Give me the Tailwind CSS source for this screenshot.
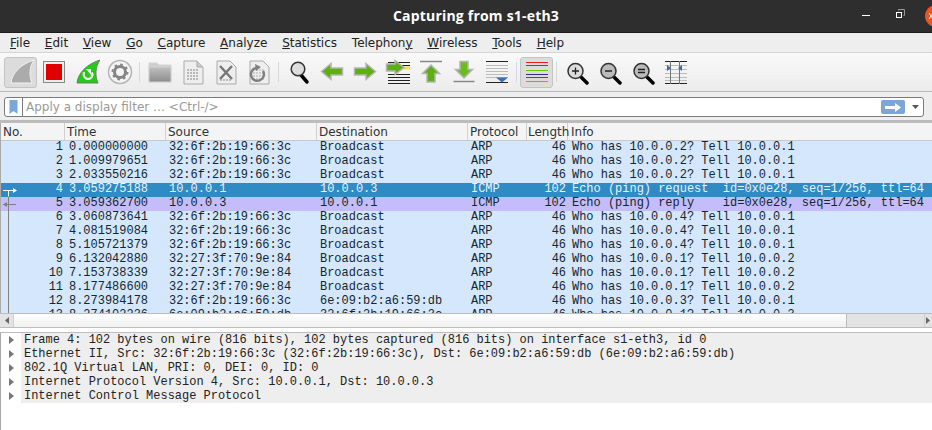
<!DOCTYPE html>
<html lang="en">

<head>
    <meta charset="UTF-8">
    <title>Capturing from s1-eth3</title>
    <script src="https://cdn.jsdelivr.net/npm/@tailwindcss/browser@4"></script>
</head>

<body class="w-[932px] h-[430px] overflow-hidden bg-white font-['DejaVu_Sans',sans-serif] text-[#2e3436]">
    <!-- title bar -->
    <div class="h-[33px] bg-[#2f2e2e] border-b border-[#1d1d1d] relative flex items-center justify-center pl-[20px]">
        <span class="font-['Open_Sans',sans-serif] font-bold text-[14px] tracking-[0.2px] text-white pb-[2px]">Capturing from s1-eth3</span>
        <div class="absolute left-[862px] top-[15px] w-[8px] h-[1px] bg-white"></div>
        <svg class="absolute left-[895px] top-[9px]" width="10" height="10" viewBox="0 0 10 10" fill="none">
            <path d="M3.500 1.500V.5h6v6h-1" stroke="#999"/>
            <rect x="1.500" y="3.500" width="5" height="5" stroke="#fff"/>
        </svg>
        <div class="absolute left-[925px] top-[5px] w-[22px] h-[22px] rounded-full bg-[#e95420]"></div>
        <svg class="absolute left-[928px] top-[12px]" width="4" height="8" viewBox="0 0 4 8" fill="none"><path d="M1 1l4 6M1 7l4-6" stroke="#fff"/></svg>
    </div>

    <!-- menu bar -->
    <div class="h-[20px] bg-[#eeeeee] flex items-center pl-[2.600px] text-[12px] text-[#222] border-b border-[#d6d6d6]">
        <span class="px-[7.400px]"><u>F</u>ile</span>
        <span class="px-[7.400px]"><u>E</u>dit</span>
        <span class="px-[7.400px]"><u>V</u>iew</span>
        <span class="px-[7.400px]"><u>G</u>o</span>
        <span class="px-[7.400px]"><u>C</u>apture</span>
        <span class="px-[7.400px]"><u>A</u>nalyze</span>
        <span class="px-[7.400px]"><u>S</u>tatistics</span>
        <span class="px-[7.400px]">Telephon<u>y</u></span>
        <span class="px-[7.400px]"><u>W</u>ireless</span>
        <span class="px-[7.400px]"><u>T</u>ools</span>
        <span class="px-[7.400px]"><u>H</u>elp</span>
    </div>

    <!-- toolbar -->
    <div class="h-[39px] bg-gradient-to-b from-[#f9f9f9] to-[#ececec] border-b border-[#b9b9b9] flex items-center pl-[4px]">
        <div class="w-[33px] h-[31px] rounded-[3px] bg-[#dcdcdc] border border-[#c4c4c4] flex items-center justify-center">
            <svg width="26" height="26" viewBox="0 0 26 26"><path d="M3 24C4 14 13 5 26 1C21 8 21 17 24 24Z" fill="#ababab" stroke="#f2f2f2"/></svg>
        </div>
        <div class="w-[33px] flex justify-center">
            <svg width="24" height="24" viewBox="0 0 24 24"><rect x="1.500" y="1.500" width="21" height="21" fill="#eee" stroke="#888"/><rect x="4" y="4" width="16" height="16" fill="#e00000"/></svg>
        </div>
        <div class="w-[33px] flex justify-center">
            <svg width="26" height="26" viewBox="0 0 26 26"><path d="M3 24C4 14 13 5 26 1C21 8 21 17 24 24Z" fill="#22cc11" stroke="#777"/><path d="M10 13c-1 4 1 7 4 7s5.500-3 4-6.500" fill="none" stroke="#fff" stroke-width="2.200"/><path d="M12 10l5 0 0 6z" fill="#fff"/></svg>
        </div>
        <div class="w-[33px] flex justify-center">
            <svg width="26" height="26" viewBox="0 0 26 26"><circle cx="13" cy="13" r="11.500" fill="#f4f4f4" stroke="#b4b4b4" stroke-width="1.500"/><circle cx="13" cy="13" r="5.500" fill="none" stroke="#848484" stroke-width="3"/><circle cx="13" cy="13" r="7.500" fill="none" stroke="#848484" stroke-width="2" stroke-dasharray="2.500 3.390"/></svg>
        </div>
        <div class="w-[7px] flex justify-center"><div class="w-[1px] h-[20px] bg-[#d8d8d8]"></div></div>
        <div class="w-[33px] flex justify-center">
            <svg width="26" height="26" viewBox="0 0 26 26"><defs><linearGradient id="fold" x1="0" y1="0" x2="0" y2="1"><stop offset="0" stop-color="#c0c0c0"/><stop offset="1" stop-color="#8c8c8c"/></linearGradient></defs><path d="M2 4h8l2 2h12v17H2z" fill="#cecece" stroke="#d4d4d4"/><rect x="2" y="8" width="22" height="15" fill="url(#fold)" stroke="#d4d4d4"/></svg>
        </div>
        <div class="w-[33px] flex justify-center">
            <svg width="26" height="26" viewBox="0 0 26 26"><path d="M4 2h13l6 6v17H4z" fill="#eee" stroke="#aaa"/><path d="M17 2v6h6" fill="#ccc" stroke="#aaa"/><path d="M7 11h12M7 14h12M7 17h12M7 20h12" stroke="#a8a8a8" stroke-width="1.500" stroke-dasharray="2 1"/></svg>
        </div>
        <div class="w-[33px] flex justify-center">
            <svg width="26" height="26" viewBox="0 0 26 26"><path d="M4 2h13l6 6v17H4z" fill="#eee" stroke="#aaa"/><path d="M7 21h12" stroke="#aaa" stroke-width="1.500" stroke-dasharray="2 1"/><path d="M7 7l12 13M19 7L7 20" stroke="#777" stroke-width="2.500"/></svg>
        </div>
        <div class="w-[33px] flex justify-center">
            <svg width="26" height="26" viewBox="0 0 26 26"><path d="M4 2h13l6 6v17H4z" fill="#eee" stroke="#aaa"/><path d="M7 11h12M7 14h12M7 17h12M7 20h12" stroke="#c4c4c4" stroke-width="1.500" stroke-dasharray="2 1"/><path d="M10 9a6.500 6.500 0 1 0 7 3" fill="none" stroke="#808080" stroke-width="2.500"/><path d="M9 5l6 3-5 4z" fill="#808080"/></svg>
        </div>
        <div class="w-[7px] flex justify-center"><div class="w-[1px] h-[20px] bg-[#d8d8d8]"></div></div>
        <div class="w-[33px] flex justify-center">
            <svg width="26" height="26" viewBox="0 0 26 26"><path d="M15 16l6 7" stroke="#000" stroke-width="3.500" stroke-linecap="round"/><circle cx="12" cy="10" r="6.800" fill="#ddd" stroke="#333" stroke-width="1.500"/></svg>
        </div>
        <div class="w-[33px] flex justify-center">
            <svg width="26" height="26" viewBox="0 0 26 26"><path d="M2.500 12.500L12 4.500v4.500h11.500v7H12v4.500z" fill="#5fae14" stroke="#b5b5b5" stroke-width="1.500"/></svg>
        </div>
        <div class="w-[33px] flex justify-center">
            <svg width="26" height="26" viewBox="0 0 26 26"><path d="M23.500 12.500L14 4.500v4.500H2.500v7H14v4.500z" fill="#5fae14" stroke="#b5b5b5" stroke-width="1.500"/></svg>
        </div>
        <div class="w-[33px] flex justify-center">
            <svg width="26" height="26" viewBox="0 0 26 26"><path d="M3 3.500h22M3 6.500h22M3 15.500h22M3 18.500h22M3 21.500h22M3 24.500h22" stroke="#222"/><rect x="18" y="7.500" width="7" height="3" fill="#f4e04d"/><path d="M19 8.500L10 1.500v3.500H1.500v7H10v3.500z" fill="#5fae14" stroke="#b5b5b5" stroke-width="1.500"/></svg>
        </div>
        <div class="w-[33px] flex justify-center">
            <svg width="26" height="26" viewBox="0 0 26 26"><path d="M2 2.500h22" stroke="#888" stroke-width="1.500"/><path d="M13 6l8.500 8.500h-4.500v8.500H9v-8.500H4.500z" fill="#5fae14" stroke="#b5b5b5" stroke-width="1.500"/></svg>
        </div>
        <div class="w-[33px] flex justify-center">
            <svg width="26" height="26" viewBox="0 0 26 26"><path d="M2.500 22.500h21" stroke="#888" stroke-width="1.500"/><path d="M13 19l8.500-8.500h-4.500V2.500H9v8H4.500z" fill="#6cbc1c" stroke="#b5b5b5" stroke-width="1.500"/></svg>
        </div>
        <div class="w-[33px] flex justify-center">
            <svg width="26" height="26" viewBox="0 0 26 26"><path d="M2 2.500h22M2 23.500h22" stroke="#222"/><path d="M2 6.500h22M2 9.500h22M2 12.500h22M2 15.500h22M2 18.500h22" stroke="#bbb"/><path d="M12 18.500h12l-6 5z" fill="#3b6fb0"/></svg>
        </div>
        <div class="w-[7px] flex justify-center"><div class="w-[1px] h-[20px] bg-[#d8d8d8]"></div></div>
        <div class="w-[33px] h-[31px] rounded-[3px] bg-[#dcdcdc] border border-[#c4c4c4] flex items-center justify-center">
            <svg width="24" height="24" viewBox="0 0 24 24"><path d="M1 2.500h22" stroke="#e02020"/><path d="M1 5.500h22" stroke="#3050d0"/><path d="M1 10.500h22" stroke="#60d000"/><path d="M1 14.500h22" stroke="#303080"/><path d="M1 17.500h22" stroke="#803090"/><path d="M1 21.500h22" stroke="#c09020"/></svg>
        </div>
        <div class="w-[7px] flex justify-center"><div class="w-[1px] h-[20px] bg-[#d8d8d8]"></div></div>
        <div class="w-[33px] flex justify-center">
            <svg width="26" height="26" viewBox="0 0 26 26"><path d="M17 18l6 6" stroke="#000" stroke-width="3.500" stroke-linecap="round"/><circle cx="11.500" cy="12" r="7.500" fill="#ddd" stroke="#333" stroke-width="1.500"/><path d="M8 12h7M11.500 8.500v7" stroke="#222" stroke-width="1.300"/></svg>
        </div>
        <div class="w-[33px] flex justify-center">
            <svg width="26" height="26" viewBox="0 0 26 26"><path d="M17 18l6 6" stroke="#000" stroke-width="3.500" stroke-linecap="round"/><circle cx="11.500" cy="12" r="7.500" fill="#bbb" stroke="#333" stroke-width="1.500"/><path d="M8 12h7" stroke="#222" stroke-width="1.500"/></svg>
        </div>
        <div class="w-[33px] flex justify-center">
            <svg width="26" height="26" viewBox="0 0 26 26"><path d="M17 18l6 6" stroke="#000" stroke-width="3.500" stroke-linecap="round"/><circle cx="11.500" cy="12" r="7.500" fill="#bbb" stroke="#333" stroke-width="1.500"/><path d="M8 10.500h7M8 13.500h7" stroke="#222" stroke-width="1.300"/></svg>
        </div>
        <div class="w-[33px] flex justify-center">
            <svg width="26" height="26" viewBox="0 0 26 26"><path d="M2 2.500h22M2 24.500h22" stroke="#222"/><path d="M2 6.500h22M2 10.500h22M2 14.500h22M2 18.500h22M2 21.500h22" stroke="#bbb"/><path d="M7.500 2v23M16.500 2v23" stroke="#777"/><path d="M4 6l4 3-4 3zM19 6l-4 3 4 3z" fill="#3b6fb0"/></svg>
        </div>
    </div>

    <!-- display filter -->
    <div class="h-[31px] bg-[#eeeeee] pt-[5px] px-[4px] border-b-[3px] border-[#bcbcbc]">
        <div class="w-[920px] h-[20px] bg-white border border-[#7b7b7b] rounded-[3px] flex items-center text-[12px] text-[#9a9a9a]">
            <div class="w-[18px] h-full border-r border-[#7b7b7b] flex items-center justify-center shrink-0">
                <svg width="9" height="14" viewBox="0 0 9 14"><path d="M.5 0h8v14L4.500 11 .5 14z" fill="#7aa6da"/></svg>
            </div>
            <span class="pl-[3px] grow">Apply a display filter … &lt;Ctrl-/&gt;</span>
            <div class="w-[24px] h-[14px] rounded-[2px] bg-[#7aa6da] flex items-center justify-center">
                <svg width="16" height="9" viewBox="0 0 16 9"><path d="M0 3h10V0l6 4.500-6 4.500V6H0z" fill="#fff"/></svg>
            </div>
            <svg class="ml-[7px] mr-[4px]" width="7" height="4" viewBox="0 0 7 4"><path d="M0 0h7L3.500 4z" fill="#555"/></svg>
        </div>
    </div>

    <!-- packet list -->
    <div class="relative h-[190px] overflow-hidden border-l border-[#aaa]">
        <div id="head" class="h-[18px] grid grid-cols-[64px_101px_151px_151px_59px_41px_1fr] bg-[#f4f4f4] border-b border-[#c8c8c8] text-[12px] text-[#2e3436]">
            <div class="pl-[2px] border-r border-[#d0d0d0] leading-[18px]">No.</div>
            <div class="pl-[2px] border-r border-[#d0d0d0] leading-[18px]">Time</div>
            <div class="pl-[2px] border-r border-[#d0d0d0] leading-[18px]">Source</div>
            <div class="pl-[2px] border-r border-[#d0d0d0] leading-[18px]">Destination</div>
            <div class="pl-[2px] border-r border-[#d0d0d0] leading-[18px]">Protocol</div>
            <div class="pl-[1px] border-r border-[#d0d0d0] leading-[18px] whitespace-nowrap">Length</div>
            <div class="pl-[3px] leading-[18px]">Info</div>
        </div>
        <div id="rows" class="font-['Liberation_Mono',monospace] text-[11.97px]"></div>
        <!-- related packet marks -->
        <svg class="absolute left-0 top-[60px]" width="20" height="130" viewBox="0 0 20 130" fill="none">
            <path d="M2 7.500h11" stroke="#fff"/><path d="M12 5l4 2.500-4 2.500z" fill="#fff"/><path d="M7.500 7.500v6" stroke="#fff"/>
            <path d="M2 21.500h13" stroke="#808080"/><path d="M7.500 14v116" stroke="#808080"/><path d="M6 19l-4 2.500 4 2.500z" fill="#808080"/>
        </svg>
    </div>

    <!-- horizontal scrollbar -->
    <div class="h-[15px] flex border-y border-[#bcbcbc] bg-[#e3e3e3]">
        <div class="w-[14px] border-r border-[#d0d0d0] flex items-center justify-center">
            <svg width="4" height="7" viewBox="0 0 4 7"><path d="M4 0v7L0 3.500z" fill="#666"/></svg>
        </div>
        <div class="w-[833px] border-r border-[#bcbcbc] bg-gradient-to-b from-white to-[#f0f0f0]"></div>
        <div class="grow"></div>
        <div class="w-[8px] border-l border-[#d0d0d0] flex items-center pl-[1px]">
            <svg width="4" height="7" viewBox="0 0 4 7"><path d="M0 0v7L4 3.500z" fill="#666"/></svg>
        </div>
    </div>

    <!-- packet details -->
    <div class="mt-[4px] border-t border-[#bcbcbc] border-l border-l-[#aaa] h-[98px] flex items-start">
        <div class="w-[20px] shrink-0 flex flex-col items-center">
            <svg class="my-[3px] ml-[1px]" width="5" height="8" viewBox="0 0 5 8"><path d="M0 0v8l5-4z" fill="#777"/></svg>
            <svg class="my-[3px] ml-[1px]" width="5" height="8" viewBox="0 0 5 8"><path d="M0 0v8l5-4z" fill="#777"/></svg>
            <svg class="my-[3px] ml-[1px]" width="5" height="8" viewBox="0 0 5 8"><path d="M0 0v8l5-4z" fill="#777"/></svg>
            <svg class="my-[3px] ml-[1px]" width="5" height="8" viewBox="0 0 5 8"><path d="M0 0v8l5-4z" fill="#777"/></svg>
            <svg class="my-[3px] ml-[1px]" width="5" height="8" viewBox="0 0 5 8"><path d="M0 0v8l5-4z" fill="#777"/></svg>
        </div>
        <div class="grow h-[70px] bg-[#eeeeee] pl-[3px] font-['Liberation_Mono',monospace] text-[11.97px] leading-[14px] text-[#222]">
            <div>Frame 4: 102 bytes on wire (816 bits), 102 bytes captured (816 bits) on interface s1-eth3, id 0</div>
            <div>Ethernet II, Src: 32:6f:2b:19:66:3c (32:6f:2b:19:66:3c), Dst: 6e:09:b2:a6:59:db (6e:09:b2:a6:59:db)</div>
            <div>802.1Q Virtual LAN, PRI: 0, DEI: 0, ID: 0</div>
            <div>Internet Protocol Version 4, Src: 10.0.0.1, Dst: 10.0.0.3</div>
            <div>Internet Control Message Protocol</div>
        </div>
    </div>

    <script>
        const mac1 = '32:6f:2b:19:66:3c', mac2 = '32:27:3f:70:9e:84', mac3 = '6e:09:b2:a6:59:db';
        const paquetes = [
            ['1', '0.000000000', mac1, 'Broadcast', 'ARP', '46', 'Who has 10.0.0.2? Tell 10.0.0.1'],
            ['2', '1.009979651', mac1, 'Broadcast', 'ARP', '46', 'Who has 10.0.0.2? Tell 10.0.0.1'],
            ['3', '2.033550216', mac1, 'Broadcast', 'ARP', '46', 'Who has 10.0.0.2? Tell 10.0.0.1'],
            ['4', '3.059275188', '10.0.0.1', '10.0.0.3', 'ICMP', '102', 'Echo (ping) request  id=0x0e28, seq=1/256, ttl=64'],
            ['5', '3.059362700', '10.0.0.3', '10.0.0.1', 'ICMP', '102', 'Echo (ping) reply    id=0x0e28, seq=1/256, ttl=64'],
            ['6', '3.060873641', mac1, 'Broadcast', 'ARP', '46', 'Who has 10.0.0.4? Tell 10.0.0.1'],
            ['7', '4.081519084', mac1, 'Broadcast', 'ARP', '46', 'Who has 10.0.0.4? Tell 10.0.0.1'],
            ['8', '5.105721379', mac1, 'Broadcast', 'ARP', '46', 'Who has 10.0.0.4? Tell 10.0.0.1'],
            ['9', '6.132042880', mac2, 'Broadcast', 'ARP', '46', 'Who has 10.0.0.1? Tell 10.0.0.2'],
            ['10', '7.153738339', mac2, 'Broadcast', 'ARP', '46', 'Who has 10.0.0.1? Tell 10.0.0.2'],
            ['11', '8.177486600', mac2, 'Broadcast', 'ARP', '46', 'Who has 10.0.0.1? Tell 10.0.0.2'],
            ['12', '8.273984178', mac1, mac3, 'ARP', '46', 'Who has 10.0.0.3? Tell 10.0.0.1'],
            ['13', '8.274102236', mac3, mac1, 'ARP', '46', 'Who has 10.0.0.1? Tell 10.0.0.3']
        ];

        function fila(p, i) {
            let color = 'bg-[#d5e7fd] text-[#12272e]';
            if (i === 3) color = 'bg-[#2e8bc4] text-[#e8f2f8]';
            if (i === 4) color = 'bg-[#c5bdfb] text-[#12272e]';
            return `<div class="h-[14px] leading-[12px] whitespace-pre grid grid-cols-[64px_101px_151px_151px_59px_41px_1fr] ${color}">
                <div class="text-right pr-[2px]">${p[0]}</div>
                <div class="pl-[4px]">${p[1]}</div>
                <div class="pl-[3px]">${p[2]}</div>
                <div class="pl-[3px]">${p[3]}</div>
                <div class="pl-[3px]">${p[4]}</div>
                <div class="text-right pr-[2px]">${p[5]}</div>
                <div class="pl-[4px]">${p[6]}</div>
            </div>`;
        }

        document.getElementById('rows').innerHTML = paquetes.map(fila).join('');
    </script>
</body>

</html>
